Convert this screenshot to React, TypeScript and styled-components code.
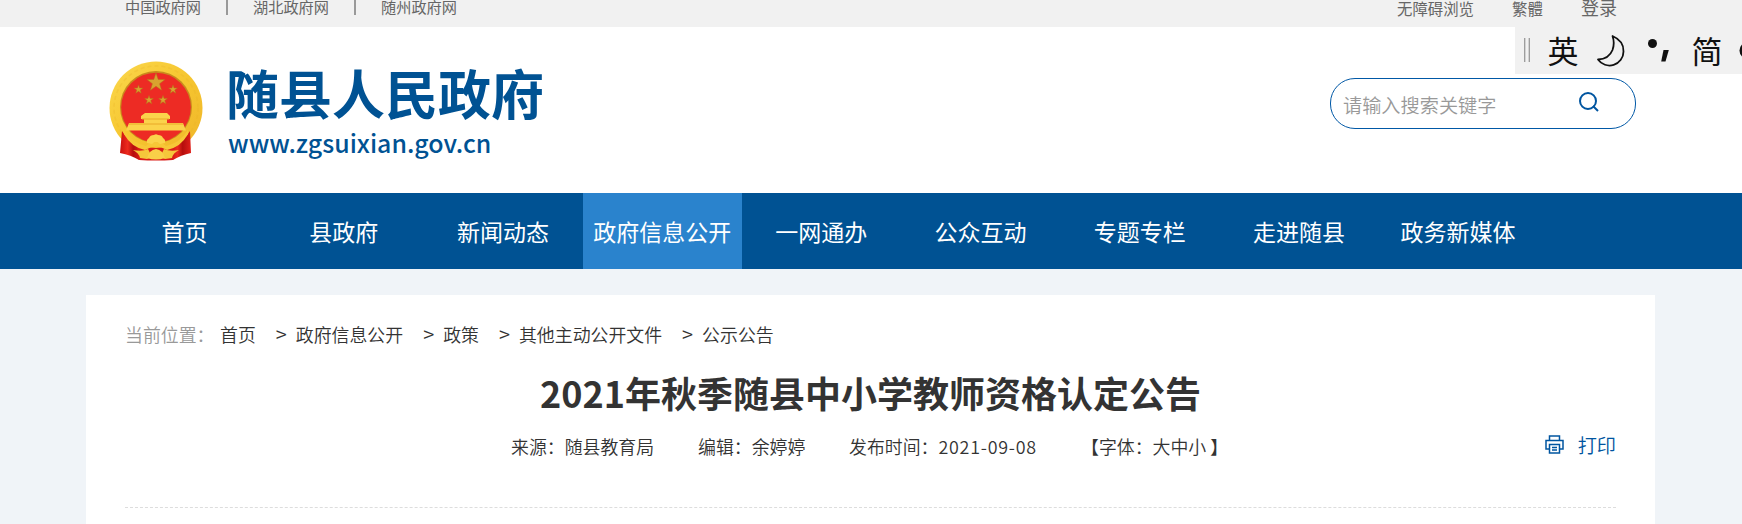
import React from "react";
import styled, { createGlobalStyle } from "styled-components";

const GlobalStyle = createGlobalStyle`
  * {
    box-sizing: border-box;
  }
  body {
    margin: 0;
    background: #f0f4f8;
    font-family: "Noto Sans CJK SC", sans-serif;
    color: #333;
    overflow: hidden;
  }
`;

const Page = styled.div`
  width: 1742px;
  height: 524px;
  overflow: hidden;
  white-space: nowrap;
`;

const TopBar = styled.div`
  height: 27px;
  padding: 0 125px;
  background: #f1f1f1;
  display: flex;
  justify-content: space-between;
  align-items: flex-start;
`;

const TopLinks = styled.div`
  display: flex;
  align-items: flex-start;
`;

const TopLink = styled.a<{ $size?: number; $width: number; $top?: number }>`
  width: ${(p) => p.$width}px;
  margin-top: ${(p) => p.$top ?? -4}px;
  color: #666;
  font-size: ${(p) => p.$size ?? 15.2}px;
  line-height: 20px;
`;

const TopDivider = styled.span`
  width: 2px;
  height: 15px;
  margin-right: 25px;
  background: #999;
`;

const Header = styled.header`
  position: relative;
  height: 166px;
  padding: 34px 106px 0 109px;
  background: white;
  display: flex;
  justify-content: space-between;
`;

const Brand = styled.div`
  display: flex;
  gap: 23px;
`;

const BrandText = styled.div`
  display: flex;
  flex-direction: column;
  color: #005293;
`;

const BrandName = styled.h1`
  margin: 1px 0 0;
  font-size: 53px;
  font-weight: 700;
  line-height: 60px;
`;

const BrandUrl = styled.span`
  margin: 8px 0 0 2px;
  font-size: 24.9px;
  font-weight: 500;
  line-height: 24px;
`;

const SearchBox = styled.div`
  width: 306px;
  height: 51px;
  margin-top: 17px;
  padding: 0 36px 0 12px;
  border: 1px solid #0058a6;
  border-radius: 25px;
  background: white;
  display: flex;
  justify-content: space-between;
  align-items: center;
`;

const Placeholder = styled.span`
  color: #999;
  font-size: 19.2px;
  font-weight: 350;
  line-height: 28px;
  padding-top: 2px;
`;

const SearchIcon = styled.svg`
  margin-top: -3px;
`;

const ImeBar = styled.div`
  position: absolute;
  top: 0;
  right: 0;
  width: 227px;
  height: 47px;
  background: #f1f1f1;
`;

const Nav = styled.nav`
  height: 76px;
  padding-left: 105px;
  background: #005293;
  display: flex;
`;

const NavItem = styled.a<{ $active?: boolean }>`
  width: 159.2px;
  background: ${(p) => (p.$active ? "#2a83cd" : "transparent")};
  color: white;
  font-size: 23px;
  line-height: 76px;
  text-align: center;
`;

const Card = styled.main`
  width: 1569px;
  height: 240px;
  margin: 26px 0 0 86px;
  padding: 25px 39px 0;
  background: white;
`;

const Crumbs = styled.div`
  display: flex;
  font-size: 17.9px;
  font-weight: 350;
  line-height: 28px;
`;

const CrumbLabel = styled.span`
  width: 95px;
  color: #999;
`;

const Crumb = styled.a`
  color: #333;
`;

const Arrow = styled.span`
  width: 40px;
  padding-left: 20px;
  font-size: 20px;
`;

const Title = styled.h2`
  margin: 17px 0 0;
  font-size: 36px;
  font-weight: 700;
  line-height: 54px;
  text-align: center;
`;

const MetaRow = styled.div`
  margin-top: 12px;
  padding-left: 386px;
  display: flex;
  justify-content: space-between;
  font-size: 17.9px;
  font-weight: 350;
  line-height: 30px;
`;

const Meta = styled.div`
  display: flex;
`;

const MetaItem = styled.span<{ $width: number }>`
  width: ${(p) => p.$width}px;
`;

const MetaDate = styled.span`
  letter-spacing: 0.75px;
`;

const Print = styled.a`
  display: flex;
  align-items: center;
  gap: 14px;
  margin-top: -3px;
  color: #0055a0;
  font-size: 19.2px;
`;

const Divider = styled.div`
  margin-top: 46px;
  border-top: 1px dashed #ddd;
`;

const navItems = [
  "首页",
  "县政府",
  "新闻动态",
  "政府信息公开",
  "一网通办",
  "公众互动",
  "专题专栏",
  "走进随县",
  "政务新媒体",
];

const crumbs = ["首页", "政府信息公开", "政策", "其他主动公开文件", "公示公告"];

const starPoints = (cx: number, cy: number, r: number) =>
  Array.from({ length: 10 }, (_, i) => {
    const radius = i % 2 ? r * 0.4 : r;
    const angle = (Math.PI / 5) * i - Math.PI / 2;
    return `${cx + radius * Math.cos(angle)},${cy + radius * Math.sin(angle)}`;
  }).join(" ");

const Emblem = () => (
  <svg width="94" height="100" viewBox="0 0 94 100">
    <defs>
      <linearGradient id="gold" x1="0" y1="0" x2="1" y2="1">
        <stop offset="0" stopColor="#fbd84e" />
        <stop offset="0.5" stopColor="#f6c62f" />
        <stop offset="1" stopColor="#efb52a" />
      </linearGradient>
      <linearGradient id="drape" x1="0" y1="0" x2="1" y2="0">
        <stop offset="0" stopColor="#c9100f" />
        <stop offset="0.35" stopColor="#ed2a1e" />
        <stop offset="0.6" stopColor="#b50e0d" />
        <stop offset="1" stopColor="#e0201a" />
      </linearGradient>
    </defs>
    <circle cx="47" cy="47" r="46.5" fill="url(#gold)" />
    <circle cx="47" cy="47" r="42" fill="none" stroke="#e8ae24" strokeWidth="1.5" strokeDasharray="4 3" opacity="0.25" />
    <circle cx="47" cy="46" r="36" fill="#c98a1d" />
    <circle cx="47" cy="46.5" r="34.8" fill="#ed2b24" />
    <g fill="#d9a32f" stroke="#b5701b" strokeWidth="0.5">
      <polygon points={starPoints(47, 21.5, 9.5)} />
      <polygon points={starPoints(29.5, 28.5, 4.6)} />
      <polygon points={starPoints(64, 28.5, 4.6)} />
      <polygon points={starPoints(40, 39, 4.6)} />
      <polygon points={starPoints(54, 39, 4.6)} />
    </g>
    <path d="M36 52H58L61 55V58H58V62H74L77 69.500H17L20 62H35V58H32V55Z" fill="#fbd34b" />
    <path d="M33 58H60M20 63H74" stroke="#e9a829" strokeWidth="1" />
    <path d="M13 70Q18 80 33 85L30 99Q22 94 11 92Z" fill="url(#drape)" />
    <path d="M81 70Q76 80 61 85L64 99Q72 94 82 92Z" fill="url(#drape)" />
    <path d="M28 84Q47 90 66 84L64 99Q47 100 30 99Z" fill="#d91c18" />
    <path d="M15 69Q23 82 37 85Q41 81 47 81Q53 81 57 85Q71 82 79 69L79 73Q72 86 58 89Q47 82 36 89Q22 86 15 73Z" fill="#f7c737" />
    <path d="M38 82Q37 79 40 77Q41 74 45 74Q47 72.500 49 74Q53 74 54 77Q57 79 56 82L51 83Q47 79 43 83Z" fill="#fbd34b" />
    <path d="M24 89Q33 91 39 88L43 96L38 98L31 97Q30 92 24 89Z" fill="#f5c63b" />
    <path d="M70 89Q61 91 55 88L51 96L56 98L63 97Q64 92 70 89Z" fill="#f5c63b" />
    <path d="M38 97Q40 89 47 88Q54 89 56 97Q47 100 38 97Z" fill="#f9cf48" />
  </svg>
);

const ImeStatus = () => (
  <ImeBar>
    <svg width="227" height="47" viewBox="0 0 227 47">
      <path d="M9.700 11V35M14.300 11V35" stroke="#999" strokeWidth="1.300" />
      <text x="32.500" y="35.500" fontSize="31" fill="#111">英</text>
      <path
        d="M97.500 9Q109 14 108.500 24.500A14 14 0 0 1 83 32.500Q94 32 97.500 23Q100 16 97.500 9Z"
        fill="none"
        stroke="#111"
        strokeWidth="1.800"
        strokeLinejoin="round"
      />
      <circle cx="137.500" cy="16.500" r="4.500" fill="#111" />
      <path d="M148.500 23H153.800L150.500 34.500H146.200Z" fill="#111" />
      <text x="176.500" y="35.500" fontSize="31" fill="#111">简</text>
      <circle cx="233" cy="23.500" r="8.500" fill="#111" />
    </svg>
  </ImeBar>
);

export default function App() {
  return (
    <Page>
      <GlobalStyle />
      <TopBar>
        <TopLinks>
          <TopLink $width={101}>中国政府网</TopLink>
          <TopDivider />
          <TopLink $width={101}>湖北政府网</TopLink>
          <TopDivider />
          <TopLink $width={101}>随州政府网</TopLink>
        </TopLinks>
        <TopLinks>
          <TopLink $width={115} $top={-2} $size={15.4}>无障碍浏览</TopLink>
          <TopLink $width={69} $top={-2} $size={15.4}>繁體</TopLink>
          <TopLink $width={36} $top={-3} $size={18}>登录</TopLink>
        </TopLinks>
      </TopBar>
      <Header>
        <Brand>
          <Emblem />
          <BrandText>
            <BrandName>随县人民政府</BrandName>
            <BrandUrl>www.zgsuixian.gov.cn</BrandUrl>
          </BrandText>
        </Brand>
        <SearchBox>
          <Placeholder>请输入搜索关键字</Placeholder>
          <SearchIcon width="20" height="20" viewBox="0 0 20 20" fill="none" stroke="#0055a0" strokeWidth="2">
            <circle cx="9" cy="9" r="8" />
            <path d="M14 14L19 19" />
          </SearchIcon>
        </SearchBox>
        <ImeStatus />
      </Header>
      <Nav>
        {navItems.map((item) => (
          <NavItem key={item} $active={item === "政府信息公开"}>{item}</NavItem>
        ))}
      </Nav>
      <Card>
        <Crumbs>
          <CrumbLabel>当前位置：</CrumbLabel>
          {crumbs.map((crumb, i) => (
            <React.Fragment key={crumb}>
              {i > 0 && <Arrow>&gt;</Arrow>}
              <Crumb>{crumb}</Crumb>
            </React.Fragment>
          ))}
        </Crumbs>
        <Title>2021年秋季随县中小学教师资格认定公告</Title>
        <MetaRow>
          <Meta>
            <MetaItem $width={187}>来源：随县教育局</MetaItem>
            <MetaItem $width={151}>编辑：余婷婷</MetaItem>
            <MetaItem $width={232}>
              发布时间：<MetaDate>2021-09-08</MetaDate>
            </MetaItem>
            <MetaItem $width={150}>【字体：大中小 】</MetaItem>
          </Meta>
          <Print>
            <svg width="19" height="19" viewBox="0 0 19 19" fill="none" stroke="#0055a0" strokeWidth="1.5">
              <path d="M4.500 5V1H14.500V5M4.500 14H1V5.500H18V14H14.500" />
              <path d="M4.500 9.500H14.500V18H4.500ZM7 12.500H12M7 15H12" />
            </svg>
            打印
          </Print>
        </MetaRow>
        <Divider />
      </Card>
    </Page>
  );
}
